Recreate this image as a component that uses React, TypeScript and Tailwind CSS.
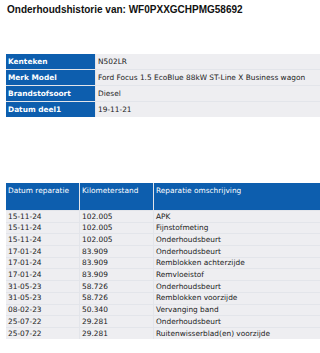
const vehicle = [
  { label: "Kenteken", value: "N502LR" },
  { label: "Merk Model", value: "Ford Focus 1.5 EcoBlue 88kW ST-Line X Business wagon" },
  { label: "Brandstofsoort", value: "Diesel" },
  { label: "Datum deel1", value: "19-11-21" },
];

const repairs = [
  ["15-11-24", "102.005", "APK"],
  ["15-11-24", "102.005", "Fijnstofmeting"],
  ["15-11-24", "102.005", "Onderhoudsbeurt"],
  ["17-01-24", "83.909", "Onderhoudsbeurt"],
  ["17-01-24", "83.909", "Remblokken achterzijde"],
  ["17-01-24", "83.909", "Remvloeistof"],
  ["31-05-23", "58.726", "Onderhoudsbeurt"],
  ["31-05-23", "58.726", "Remblokken voorzijde"],
  ["08-02-23", "50.340", "Vervanging band"],
  ["25-07-22", "29.281", "Onderhoudsbeurt"],
  ["25-07-22", "29.281", "Ruitenwisserblad(en) voorzijde"],
];

export default function App() {
  return (
    <div className="h-[353px] w-[320px] overflow-hidden bg-white">
      <h1 className="pl-[7px] pt-[3px] font-['Liberation_Sans',Arial,sans-serif] text-[10px] font-bold leading-[14px] text-[#111]">
        Onderhoudshistorie van: WF0PXXGCHPMG58692
      </h1>

      <div className="ml-[6px] mt-[37px] grid w-[316px] grid-cols-[89px_1fr] gap-px bg-[#e3e5ea] font-['DejaVu_Sans',Verdana,sans-serif] text-[7.4px] leading-none">
        {vehicle.map((row) => (
          <div className="contents" key={row.label}>
            <div className="flex h-[15px] items-center bg-[#0d5eae] pl-[2px] font-bold text-white">{row.label}</div>
            <div className="flex h-[15px] items-center bg-[#eeeef1] pl-[2px] text-[#222]">{row.value}</div>
          </div>
        ))}
      </div>

      <div className="ml-[6px] mt-[66px] grid w-[316px] grid-cols-[73px_73px_1fr] gap-px bg-[#e3e5ea] font-['DejaVu_Sans',Verdana,sans-serif] text-[7.4px] leading-none">
        <div className="h-[27px] bg-[#0d5eae] pl-[2px] pt-[4px] text-white">Datum reparatie</div>
        <div className="h-[27px] bg-[#0d5eae] pl-[2px] pt-[4px] text-white">Kilometerstand</div>
        <div className="h-[27px] bg-[#0d5eae] pl-[2px] pt-[4px] text-white">Reparatie omschrijving</div>
        {repairs.map((r, i) => (
          <div className="contents" key={i}>
            {r.map((cell, j) => (
              <div className="flex h-[10.7px] items-center bg-[#eeeef1] pl-[2px] text-[#222]" key={j}>
                {cell}
              </div>
            ))}
          </div>
        ))}
      </div>
    </div>
  );
}
